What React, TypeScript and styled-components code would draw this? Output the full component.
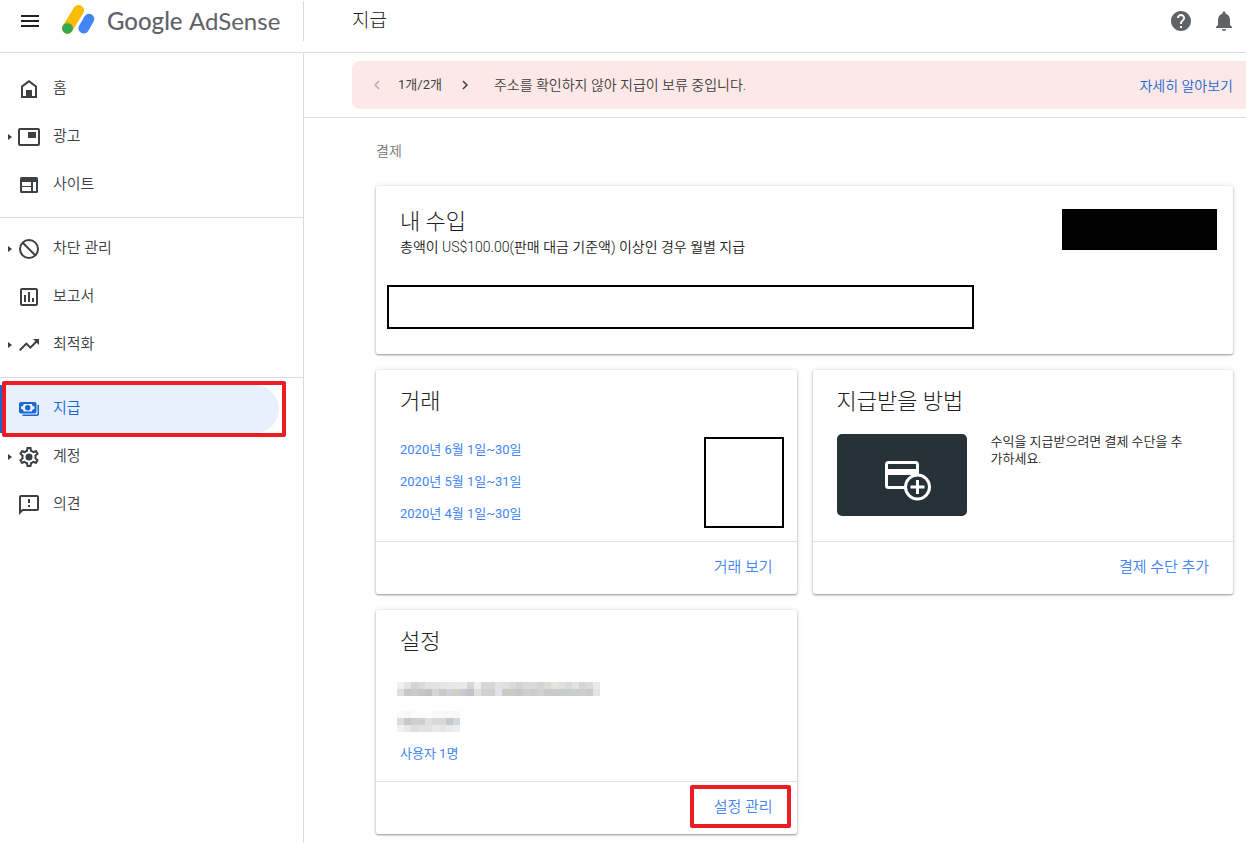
import React from 'react';
import styled, { createGlobalStyle } from 'styled-components';
import {
  MdMenu,
  MdHelp,
  MdNotifications,
  MdOutlineAssessment,
  MdTrendingUp,
  MdOutlineFeedback,
  MdChevronLeft,
  MdChevronRight,
} from 'react-icons/md';

const GlobalStyle = createGlobalStyle`
  *, *::before, *::after { box-sizing: border-box; }
  body {
    margin: 0;
    background: #fff;
    color: #212121;
    font-family: Roboto, 'Noto Sans CJK KR', sans-serif;
    font-size: 14px;
    font-weight: 350;
    line-height: 18px;
  }
  h1, h2, h3, p, ul { margin: 0; padding: 0; }
  ul { list-style: none; }
  a { text-decoration: none; color: inherit; }
  button { font: inherit; color: inherit; background: none; border: 0; padding: 0; cursor: pointer; }
  svg { display: block; flex: none; }
`;

const Page = styled.div`
  display: flex;
  flex-direction: column;
  min-height: 100vh;
`;

const Header = styled.header`
  display: flex;
  height: 53px;
  border-bottom: 1px solid #dadce0;
`;

const Brand = styled.div`
  display: flex;
  align-items: center;
  width: 304px;
  height: 40px;
  margin-top: 1px;
  padding-left: 18px;
  border-right: 1px solid #dadce0;
`;

const IconButton = styled.button`
  display: flex;
  align-items: center;
  justify-content: center;
  width: 24px;
  height: 24px;
`;

const LogoMark = styled.svg`
  margin-left: 18px;
`;

const LogoText = styled.span`
  margin-left: 11px;
  font-family: Lato, sans-serif;
  font-size: 24px;
  font-weight: 400;
  line-height: 32px;
  color: #5f6368;
  white-space: nowrap;
`;

const LogoStrong = styled.span`
  margin-right: 1px;
  font-weight: 500;
`;

const PageTitle = styled.h1`
  flex: 1;
  padding: 9px 0 0 48px;
  font-size: 19px;
  font-weight: 300;
  line-height: 24px;
  color: #202124;
`;

const HeaderActions = styled.div`
  display: flex;
  gap: 19px;
  padding: 9px 10px 0 0;
  color: #5f6368;
`;

const Body = styled.div`
  display: flex;
  flex: 1;
`;

const Sidebar = styled.nav`
  flex: none;
  width: 304px;
  padding-top: 12px;
  border-right: 1px solid #dadce0;
`;

const NavGroup = styled.ul`
  & + & {
    margin-top: 8px;
    padding-top: 7px;
    border-top: 1px solid #dadce0;
  }
`;

const NavItem = styled.li`
  position: relative;
`;

const NavLink = styled.a<{ $active?: boolean }>`
  display: flex;
  align-items: center;
  height: 48px;
  margin-right: 24px;
  border-left: 4px solid ${(p) => (p.$active ? '#1967d2' : 'transparent')};
  border-radius: 0 24px 24px 0;
  background: ${(p) => (p.$active ? '#e8f0fe' : 'transparent')};
  color: ${(p) => (p.$active ? '#1967d2' : '#3c4043')};
`;

const Caret = styled.span<{ $shown?: boolean }>`
  width: 4px;
  height: 6px;
  margin: 0 5px 0 4px;
  background: ${(p) => (p.$shown ? '#3c4043' : 'transparent')};
  clip-path: polygon(0 0, 100% 50%, 0 100%);
`;

const NavLabel = styled.span`
  margin-left: 12px;
  padding-bottom: 2px;
  font-size: 15px;
  line-height: 20px;
`;

const Highlight = styled.span<{ $inset: string }>`
  position: absolute;
  inset: ${(p) => p.$inset};
  border: 4px solid #ed1c24;
  border-radius: 2px;
  pointer-events: none;
`;

const Main = styled.main`
  flex: 1;
  min-width: 0;
`;

const BannerArea = styled.div`
  padding: 8px 0 8px 48px;
  border-bottom: 1px solid #dadce0;
`;

const Banner = styled.div`
  display: flex;
  align-items: center;
  height: 48px;
  padding: 0 13px 0 16px;
  border-radius: 8px 0 0 8px;
  background: #fce8e6;
  color: #3c4043;
`;

const PagerButton = styled.button`
  display: flex;
  align-items: center;
  justify-content: center;
  width: 18px;
  height: 18px;
  color: #3c4043;

  &:disabled { color: #b9aead; }
`;

const PagerCount = styled.span`
  margin: 0 14px 0 12px;
  font-size: 13px;
  font-weight: 400;
`;

const BannerText = styled.p`
  flex: 1;
  margin-left: 20px;
`;

const BannerLink = styled.a`
  padding-top: 2px;
  color: #1967d2;
`;

const Content = styled.div`
  padding: 24px 13px 8px 72px;
`;

const SectionLabel = styled.h2`
  margin-bottom: 26px;
  font-size: 14px;
  font-weight: 350;
  line-height: 18px;
  color: #757575;
`;

const CardGrid = styled.div`
  display: grid;
  grid-template-columns: 1fr 1fr;
  gap: 16px;
`;

const Card = styled.section<{ $wide?: boolean }>`
  display: flex;
  flex-direction: column;
  grid-column: ${(p) => (p.$wide ? '1 / -1' : 'auto')};
  min-height: ${(p) => (p.$wide ? '168px' : '224px')};
  border-radius: 2px;
  background: #fff;
  box-shadow: 0 1px 2px rgba(0, 0, 0, 0.38), 0 0 5px rgba(0, 0, 0, 0.12);
`;

const CardTitle = styled.h3`
  font-size: 22px;
  font-weight: 300;
  line-height: 28px;
  color: #212121;
`;

const EarningsTop = styled.div`
  display: flex;
  justify-content: space-between;
  padding: 22px 16px 0 24px;
`;

const EarningsNote = styled.p`
  margin-top: 2px;
`;

const AmountCover = styled.div`
  width: 155px;
  height: 41px;
  margin-top: 1px;
  background: #000;
`;

const DetailCover = styled.div`
  width: 587px;
  max-width: 100%;
  height: 44px;
  margin: 29px 0 0 11px;
  border: 2px solid #000;
`;

const CardBody = styled.div`
  flex: 1;
  padding: 18px 13px 0 24px;
`;

const CardFooter = styled.footer`
  display: flex;
  justify-content: flex-end;
  align-items: flex-start;
  height: 53px;
  padding: 15px 24px 0;
  border-top: 1px solid #e0e0e0;
`;

const FooterAction = styled.a`
  position: relative;
  font-size: 15px;
  line-height: 20px;
  color: #4285f4;
`;

const TransactionRow = styled.div`
  display: flex;
  justify-content: space-between;
  align-items: flex-start;
`;

const RowList = styled.ul`
  padding-top: 17px;
`;

const Row = styled.li`
  display: flex;
  align-items: center;
  height: 32px;
`;

const RowLink = styled.a`
  padding-top: 2px;
  font-size: 13px;
  font-weight: 400;
  color: #4285f4;
`;

const AmountsCover = styled.div`
  width: 80px;
  height: 91px;
  margin-top: 21px;
  border: 2px solid #000;
`;

const PaymentRow = styled.div`
  display: flex;
  gap: 24px;
  padding: 18px 10px 0 0;
`;

const PaymentText = styled.p`
  max-width: 196px;
  margin-top: -1px;
  font-size: 13px;
  line-height: 17px;
  word-break: break-all;
`;

const CardArt = styled.svg`
  border-radius: 5px;
  background: #263238;
`;

const Mosaic = styled.svg`
  margin-left: -3px;
`;

const HomeIcon = () => (
  <svg width="24" height="24" viewBox="0 0 24 24" fill="currentColor" aria-hidden="true">
    <path d="M12 3L4 9v12h16V9l-8-6zm6 16H6v-9l6-4.5 6 4.5v9z" />
    <path d="M9 13h6v7H9z" />
  </svg>
);

const AdsIcon = () => (
  <svg width="24" height="24" viewBox="0 0 24 24" fill="currentColor" aria-hidden="true">
    <rect x="2" y="4" width="20" height="16" rx="1" fill="none" stroke="currentColor" strokeWidth="2" />
    <path d="M11 7h8v6h-8z" />
  </svg>
);

const SitesIcon = () => (
  <svg width="24" height="24" viewBox="0 0 24 24" fill="currentColor" aria-hidden="true">
    <path
      fillRule="evenodd"
      d="M4.500 4h15A1.500 1.500 0 0 1 21 5.500v13a1.500 1.500 0 0 1-1.500 1.500h-15A1.500 1.500 0 0 1 3 18.500v-13A1.500 1.500 0 0 1 4.500 4zM5 9v4h9V9zm0 5v4h9v-4zm11-5v9h3V9z"
    />
  </svg>
);

const BlockIcon = () => (
  <svg width="24" height="24" viewBox="0 0 24 24" fill="none" stroke="currentColor" strokeWidth="2" aria-hidden="true">
    <circle cx="12" cy="12" r="9" />
    <path d="M5.500 5.500l13 13" />
  </svg>
);

const PaymentsIcon = () => (
  <svg width="24" height="24" viewBox="0 0 24 24" fill="currentColor" aria-hidden="true">
    <path
      fillRule="evenodd"
      d="M4 5h13.500a2 2 0 0 1 2 2v7.500a2 2 0 0 1-2 2H4a2 2 0 0 1-2-2V7a2 2 0 0 1 2-2zm2.500 2A2.500 2.500 0 0 1 4 9.500V12a2.500 2.500 0 0 1 2.500 2.500H15a2.500 2.500 0 0 1 2.500-2.500V9.500A2.500 2.500 0 0 1 15 7z"
    />
    <circle cx="10.750" cy="10.750" r="2.700" />
    <path d="M20.500 8H22v9a2 2 0 0 1-2 2H5.500v-1.500h14a1 1 0 0 0 1-1z" />
  </svg>
);

const AccountIcon = () => (
  <svg width="24" height="24" viewBox="0 0 24 24" fill="currentColor" aria-hidden="true">
    <path d="M19.430 12.980c.04-.32.07-.64.07-.98 0-.34-.03-.66-.07-.98l2.110-1.650c.19-.15.24-.42.12-.64l-2-3.460c-.09-.16-.26-.25-.44-.25-.06 0-.12.01-.17.03l-2.490 1c-.52-.4-1.080-.73-1.690-.98l-.38-2.650C14.460 2.180 14.250 2 14 2h-4c-.25 0-.46.18-.49.42l-.38 2.650c-.61.25-1.170.59-1.690.98l-2.490-1c-.06-.02-.12-.03-.18-.03-.17 0-.34.09-.43.25l-2 3.460c-.13.22-.07.49.12.64l2.110 1.650c-.04.32-.07.65-.07.98 0 .33.03.66.07.98l-2.110 1.650c-.19.15-.24.42-.12.64l2 3.460c.09.16.26.25.44.25.06 0 .12-.01.17-.03l2.490-1c.52.4 1.080.73 1.690.98l.38 2.650c.03.24.24.42.49.42h4c.25 0 .46-.18.49-.42l.38-2.650c.61-.25 1.170-.59 1.690-.98l2.490 1c.06.02.12.03.18.03.17 0 .34-.09.43-.25l2-3.460c.12-.22.07-.49-.12-.64l-2.110-1.650zm-1.980-1.710c.04.31.05.52.05.73 0 .21-.02.43-.05.73l-.14 1.130.89.7 1.080.84-.7 1.210-1.270-.51-1.040-.42-.9.68c-.43.32-.84.56-1.250.73l-1.060.43-.16 1.130-.2 1.350h-1.400l-.19-1.350-.16-1.130-1.060-.43c-.43-.18-.83-.41-1.230-.71l-.91-.7-1.060.43-1.270.51-.7-1.210 1.080-.84.89-.7-.14-1.130c-.03-.31-.05-.54-.05-.74s.02-.43.05-.73l.14-1.130-.89-.7-1.080-.84.7-1.210 1.270.51 1.040.42.9-.68c.43-.32.84-.56 1.250-.73l1.060-.43.16-1.130.2-1.350h1.390l.19 1.350.16 1.130 1.060.43c.43.18.83.41 1.230.71l.91.7 1.060-.43 1.270-.51.7 1.210-1.070.85-.89.7.14 1.130z" />
    <circle cx="12" cy="12" r="3.500" />
  </svg>
);

type Entry = { label: string; icon: React.ReactNode; expandable?: boolean; active?: boolean };

const groups: Entry[][] = [
  [
    { label: '홈', icon: <HomeIcon /> },
    { label: '광고', icon: <AdsIcon />, expandable: true },
    { label: '사이트', icon: <SitesIcon /> },
  ],
  [
    { label: '차단 관리', icon: <BlockIcon />, expandable: true },
    { label: '보고서', icon: <MdOutlineAssessment size={24} /> },
    { label: '최적화', icon: <MdTrendingUp size={24} />, expandable: true },
  ],
  [
    { label: '지급', icon: <PaymentsIcon />, active: true },
    { label: '계정', icon: <AccountIcon />, expandable: true },
    { label: '의견', icon: <MdOutlineFeedback size={24} /> },
  ],
];

const CELL = 7;

const nameCells = [
  ['#f1efed', '#e2e3e5', '#d0d4d6', '#dadadd', '#e3e3e1', '#e3e4e0', '#e5e6e5', '#e6e7e6', '#e8e9e5', '#e9e9ec', '#d5d6dc', '#efefef', '#d6d8d6', '#d6d7d6', '#e3e1e8', '#dfe1df', '#d9dbda', '#d3d3d3', '#d9d9dc', '#d9d9db', '#d4d4d6', '#dadbd9', '#e5e5e0', '#dfe1df', '#d8dbdc', '#e3e4e1', '#d5d5d5', '#dadcda', '#e7eaeb'],
  ['#dfdedd', '#c8c6c7', '#c9cbcd', '#c9c6c5', '#c0c4be', '#d2d8d5', '#c8c8c7', '#cdd0d4', '#cecfc5', '#c9c8cf', '#c3c2c9', '#dedfdf', '#d1d1d1', '#cfd1cf', '#e3e1e8', '#c8cac5', '#c9c9c7', '#c6c6c7', '#cececf', '#cbcbcd', '#d1d1d1', '#c7c9c6', '#c7c8c7', '#cacbc9', '#c9cccd', '#cccdcb', '#cdcecc', '#cbcaca', '#e1e5e8'],
];

const idCells = [
  ['#fafafa', '#f8f8f8', '#fdfdfd', '#fdfdfd', '#fdfdfd', '#f9f9f9', '#f9f9f9', '#f8f8f8', '#f8f8f8'],
  ['#dfd9dc', '#c3c9c7', '#d2cfd3', '#cfcfcd', '#dcdfe1', '#dbd7db', '#d8dad3', '#c5c9ca', '#d3d6db'],
  ['#f2f1f0', '#e6e8e9', '#dfdde0', '#e1e2e4', '#e2e2e5', '#eae8eb', '#e5e6e4', '#e9eae9', '#eceeee'],
];

const MosaicStrip = ({ cells }: { cells: string[][] }) => {
  const width = cells[0].length * CELL;
  const height = cells.length * CELL;
  return (
    <Mosaic width={width} height={height} viewBox={`0 0 ${width} ${height}`} shapeRendering="crispEdges" aria-hidden="true">
      {cells.map((line, y) =>
        line.map((fill, x) => <rect key={`${x}-${y}`} x={x * CELL} y={y * CELL} width={CELL} height={CELL} fill={fill} />),
      )}
    </Mosaic>
  );
};

export default function App() {
  return (
    <Page>
      <GlobalStyle />
      <Header>
        <Brand>
          <IconButton type="button" aria-label="메뉴">
            <MdMenu size={24} color="#202124" />
          </IconButton>
          <LogoMark width="36" height="32" viewBox="0 0 36 32" strokeWidth="11" strokeLinecap="round" aria-hidden="true">
            <path d="M18.500 5.500L7.500 23.500" stroke="#fbbc04" />
            <path d="M29 14L23.700 23.300" stroke="#4285f4" strokeWidth="10.500" />
            <circle cx="7.500" cy="23.300" r="5.400" fill="#34a853" />
          </LogoMark>
          <LogoText>
            <LogoStrong>Google</LogoStrong> AdSense
          </LogoText>
        </Brand>
        <PageTitle>지급</PageTitle>
        <HeaderActions>
          <IconButton type="button" aria-label="도움말">
            <MdHelp size={24} />
          </IconButton>
          <IconButton type="button" aria-label="알림">
            <MdNotifications size={24} />
          </IconButton>
        </HeaderActions>
      </Header>

      <Body>
        <Sidebar>
          {groups.map((entries, i) => (
            <NavGroup key={i}>
              {entries.map((entry) => (
                <NavItem key={entry.label}>
                  <NavLink href="#" $active={entry.active}>
                    <Caret $shown={entry.expandable} />
                    {entry.icon}
                    <NavLabel>{entry.label}</NavLabel>
                  </NavLink>
                  {entry.active && <Highlight $inset="-4px 17px -4px 2px" />}
                </NavItem>
              ))}
            </NavGroup>
          ))}
        </Sidebar>

        <Main>
          <BannerArea>
            <Banner>
              <PagerButton type="button" aria-label="이전" disabled>
                <MdChevronLeft size={18} />
              </PagerButton>
              <PagerCount>1개/2개</PagerCount>
              <PagerButton type="button" aria-label="다음">
                <MdChevronRight size={18} />
              </PagerButton>
              <BannerText>주소를 확인하지 않아 지급이 보류 중입니다.</BannerText>
              <BannerLink href="#">자세히 알아보기</BannerLink>
            </Banner>
          </BannerArea>

          <Content>
            <SectionLabel>결제</SectionLabel>
            <CardGrid>
              <Card $wide>
                <EarningsTop>
                  <div>
                    <CardTitle>내 수입</CardTitle>
                    <EarningsNote>총액이 US$100.00(판매 대금 기준액) 이상인 경우 월별 지급</EarningsNote>
                  </div>
                  <AmountCover />
                </EarningsTop>
                <DetailCover />
              </Card>

              <Card>
                <CardBody>
                  <CardTitle>거래</CardTitle>
                  <TransactionRow>
                    <RowList>
                      <Row><RowLink href="#">2020년 6월 1일~30일</RowLink></Row>
                      <Row><RowLink href="#">2020년 5월 1일~31일</RowLink></Row>
                      <Row><RowLink href="#">2020년 4월 1일~30일</RowLink></Row>
                    </RowList>
                    <AmountsCover />
                  </TransactionRow>
                </CardBody>
                <CardFooter>
                  <FooterAction href="#">거래 보기</FooterAction>
                </CardFooter>
              </Card>

              <Card>
                <CardBody>
                  <CardTitle>지급받을 방법</CardTitle>
                  <PaymentRow>
                    <CardArt width="130" height="82" viewBox="0 0 130 82" fill="none" stroke="#fff" strokeWidth="3" aria-hidden="true">
                      <rect x="49.500" y="28.500" width="31" height="25" rx="2" />
                      <path d="M49 38h32" strokeWidth="6" />
                      <circle cx="80.500" cy="53" r="12" fill="#263238" />
                      <path d="M80.500 46v14M73.500 53h14" />
                    </CardArt>
                    <PaymentText>수익을 지급받으려면 결제 수단을 추가하세요.</PaymentText>
                  </PaymentRow>
                </CardBody>
                <CardFooter>
                  <FooterAction href="#">결제 수단 추가</FooterAction>
                </CardFooter>
              </Card>

              <Card>
                <CardBody>
                  <CardTitle>설정</CardTitle>
                  <RowList>
                    <Row><MosaicStrip cells={nameCells} /></Row>
                    <Row><MosaicStrip cells={idCells} /></Row>
                    <Row><RowLink href="#">사용자 1명</RowLink></Row>
                  </RowList>
                </CardBody>
                <CardFooter>
                  <FooterAction href="#">
                    설정 관리
                    <Highlight $inset="-12px -18px -11px -24px" />
                  </FooterAction>
                </CardFooter>
              </Card>
            </CardGrid>
          </Content>
        </Main>
      </Body>
    </Page>
  );
}
